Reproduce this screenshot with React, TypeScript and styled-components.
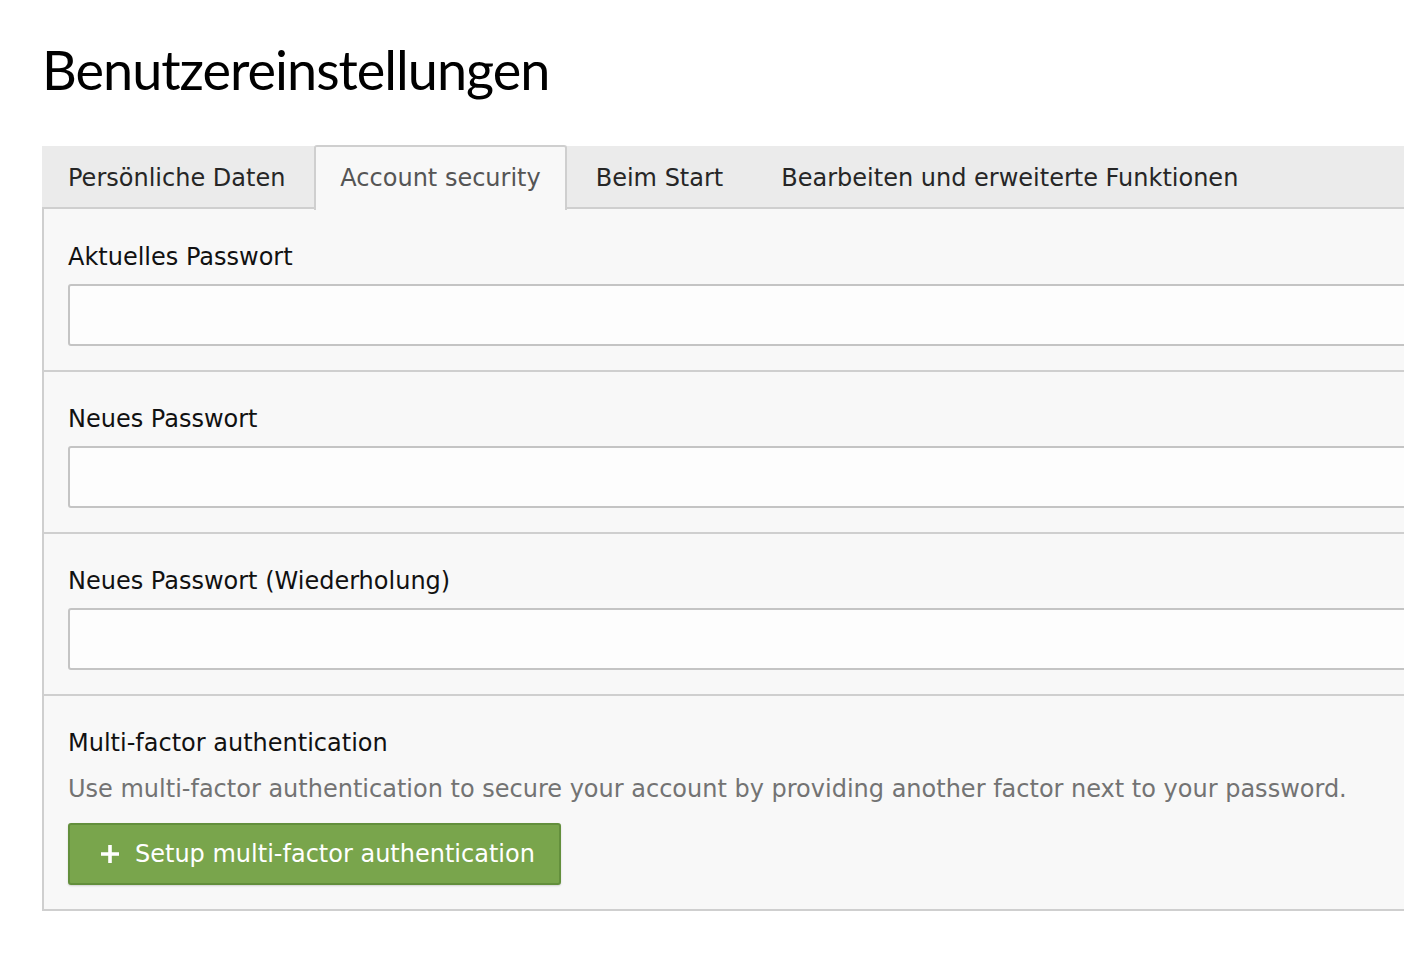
import React from 'react';
import styled, { createGlobalStyle } from 'styled-components';

const GlobalStyle = createGlobalStyle`
  html, body {
    margin: 0;
    padding: 0;
    background: #ffffff;
    overflow-x: hidden;
  }
  body {
    font-family: "DejaVu Sans", Verdana, sans-serif;
    color: #1a1a1a;
  }
`;

const Page = styled.div`
  padding: 38px 0 40px 42px;
  width: 1420px;
`;

const Title = styled.h1`
  margin: 0 0 44px 0;
  font-family: Lato, "Open Sans", sans-serif;
  font-weight: 400;
  font-size: 54px;
  line-height: 64px;
  color: #000;
  letter-spacing: -1px;
`;

const TabBar = styled.div`
  display: flex;
  height: 63px;
  background: #ebebeb;
  border-bottom: 2px solid #cfcfcf;
  box-sizing: border-box;
`;

const Tab = styled.div<{ active?: boolean }>`
  display: flex;
  align-items: center;
  padding: 0 ${p => (p.active ? '24px' : '27px')} 2px;
  height: 65px;
  margin-top: -1px;
  margin-bottom: -2px;
  box-sizing: border-box;
  font-size: 24px;
  color: ${p => (p.active ? '#555' : '#262626')};
  background: ${p => (p.active ? '#f8f8f8' : 'transparent')};
  border: 2px solid ${p => (p.active ? '#cfcfcf' : 'transparent')};
  border-bottom: none;
  border-radius: 3px 3px 0 0;
  cursor: pointer;
  &:first-child {
    border-left: none;
    padding-left: 26px;
  }
`;

const Panel = styled.div`
  background: #f8f8f8;
  border-left: 2px solid #cfcfcf;
  border-bottom: 2px solid #cfcfcf;
`;

const Section = styled.div`
  padding: 33px 26px 24px 24px;
  & + & {
    border-top: 2px solid #cfcfcf;
    padding-top: 32px;
  }
`;

const Label = styled.div`
  font-size: 24px;
  line-height: 31px;
  color: #111;
  margin-bottom: 11px;
`;

const Input = styled.div`
  height: 62px;
  box-sizing: border-box;
  background: #fdfdfd;
  border: 2px solid #c4c4c4;
  border-radius: 3px;
`;

const Description = styled.p`
  margin: 0 0 18px;
  padding-top: 3px;
  font-size: 24px;
  line-height: 32px;
  color: #737373;
`;

const SuccessButton = styled.button`
  display: inline-flex;
  align-items: center;
  gap: 15px;
  height: 62px;
  padding: 0 24px 0 30px;
  box-sizing: border-box;
  background: #79a54c;
  border: 2px solid #638f3c;
  border-radius: 3px;
  box-shadow: 0 1px 2px rgba(0, 0, 0, 0.15);
  color: #fff;
  font-family: "DejaVu Sans", Verdana, sans-serif;
  font-size: 24px;
  cursor: pointer;
`;

const PlusIcon = () => (
  <svg width="20" height="20" viewBox="0 0 20 20" aria-hidden="true">
    <path d="M10 1v18M1 10h18" stroke="#fff" strokeWidth="3.6" />
  </svg>
);

const tabs = ['Persönliche Daten', 'Account security', 'Beim Start', 'Bearbeiten und erweiterte Funktionen'];

const passwordFields = ['Aktuelles Passwort', 'Neues Passwort', 'Neues Passwort (Wiederholung)'];

export default function App() {
  return (
    <>
      <GlobalStyle />
      <Page>
        <Title>Benutzereinstellungen</Title>
        <TabBar>
          {tabs.map(t => (
            <Tab key={t} active={t === 'Account security'}>
              {t}
            </Tab>
          ))}
        </TabBar>
        <Panel>
          {passwordFields.map(label => (
            <Section key={label}>
              <Label>{label}</Label>
              <Input />
            </Section>
          ))}
          <Section>
            <Label>Multi-factor authentication</Label>
            <Description>
              Use multi-factor authentication to secure your account by providing another factor next to your password.
            </Description>
            <SuccessButton>
              <PlusIcon />
              Setup multi-factor authentication
            </SuccessButton>
          </Section>
        </Panel>
      </Page>
    </>
  );
}
